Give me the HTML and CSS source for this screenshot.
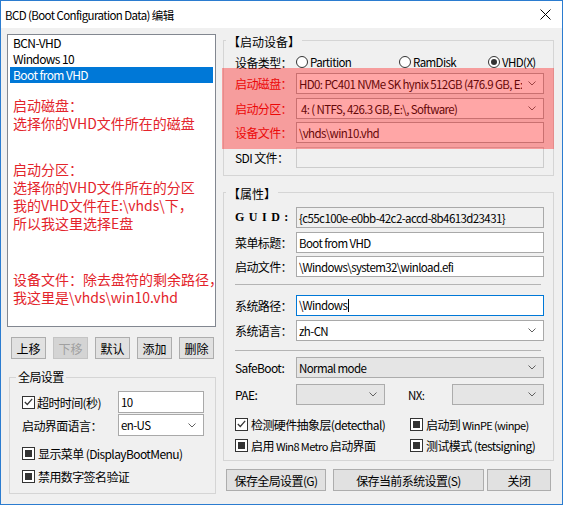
FILE: index.html
```html
<!DOCTYPE html>
<html lang="zh-CN">
<head>
<meta charset="utf-8">
<title>BCD 编辑</title>
<link rel="stylesheet" href="styles.css">
</head>
<body>
<div class="window">
  <div class="titlebar">
    <span class="title">BCD (Boot Configuration Data) 编辑</span>
    <svg class="close" width="11" height="11" viewBox="0 0 11 11"><path d="M0.5 0.5 L10.5 10.5 M10.5 0.5 L0.5 10.5" stroke="#000" stroke-width="1" fill="none"/></svg>
  </div>
  <div class="client">
    <div class="leftcol">
      <div class="listbox">
        <div class="item">BCN-VHD</div>
        <div class="item">Windows 10</div>
        <div class="item sel">Boot from VHD</div>
        <div class="note n1">启动磁盘：<br>选择你的VHD文件所在的磁盘</div>
        <div class="note n2">启动分区：<br>选择你的VHD文件所在的分区<br>我的VHD文件在E:\vhds\下，<br>所以我这里选择E盘</div>
        <div class="note n3">设备文件：除去盘符的剩余路径，<br>我这里是\vhds\win10.vhd</div>
      </div>
      <div class="btnrow">
        <div class="btn">上移</div>
        <div class="btn disabled">下移</div>
        <div class="btn">默认</div>
        <div class="btn">添加</div>
        <div class="btn">删除</div>
      </div>
      <fieldset class="group global">
        <legend>全局设置</legend>
        <div class="grow r1">
          <div class="glabel"><span class="cb chk"><svg width="9" height="8" viewBox="0 0 9 8"><path d="M0.8 4 L3.3 6.5 L8.2 0.8" stroke="#333" stroke-width="1.2" fill="none"/></svg></span><span>超时时间(秒)</span></div>
          <div class="ctl gctl">10</div>
        </div>
        <div class="grow r2">
          <div class="glabel">启动界面语言：</div>
          <div class="ctl gctl combo"><span class="val">en-US</span><svg class="arrow" width="8" height="5" viewBox="0 0 8 5"><path d="M0.5 0.5 L4 4 L7.5 0.5" stroke="#606060" fill="none"/></svg></div>
        </div>
        <div class="crow r3"><span class="cb ind"></span><span>显示菜单 (DisplayBootMenu)</span></div>
        <div class="crow r4"><span class="cb ind"></span><span>禁用数字签名验证</span></div>
      </fieldset>
    </div>
    <div class="rightcol">
      <fieldset class="group g1">
        <legend>【启动设备】</legend>
        <div class="frow radios">
          <span class="flabel">设备类型：</span>
          <span class="radio w1"><span class="rb"></span>Partition</span>
          <span class="radio w2"><span class="rb"></span>RamDisk</span>
          <span class="radio"><span class="rb on"></span>VHD(X)</span>
        </div>
        <div class="frow m1">
          <span class="flabel red">启动磁盘：</span>
          <div class="ctl combo"><span class="val">HD0: PC401 NVMe SK hynix 512GB (476.9 GB, E:\, Software)</span><svg class="arrow" width="8" height="5" viewBox="0 0 8 5"><path d="M0.5 0.5 L4 4 L7.5 0.5" stroke="#606060" fill="none"/></svg></div>
        </div>
        <div class="frow m4">
          <span class="flabel red">启动分区：</span>
          <div class="ctl combo"><span class="val">&nbsp;4: ( NTFS, 426.3 GB, E:\, Software)</span><svg class="arrow" width="8" height="5" viewBox="0 0 8 5"><path d="M0.5 0.5 L4 4 L7.5 0.5" stroke="#606060" fill="none"/></svg></div>
        </div>
        <div class="frow m3">
          <span class="flabel red">设备文件：</span>
          <div class="ctl">\vhds\win10.vhd</div>
        </div>
        <div class="frow m4">
          <span class="flabel">SDI 文件：</span>
          <div class="ctl dis"></div>
        </div>
      </fieldset>
      <fieldset class="group g2">
        <legend>【属性】</legend>
        <div class="frow guidrow">
          <span class="flabel guid">GUID:</span>
          <div class="ctl ro">{c55c100e-e0bb-42c2-accd-8b4613d23431}</div>
        </div>
        <div class="frow m4">
          <span class="flabel">菜单标题：</span>
          <div class="ctl">Boot from VHD</div>
        </div>
        <div class="frow m3">
          <span class="flabel">启动文件：</span>
          <div class="ctl">\Windows\system32\winload.efi</div>
        </div>
        <div class="sep s1"></div>
        <div class="frow h22 m9">
          <span class="flabel">系统路径：</span>
          <div class="ctl focus">\Windows<span class="caret"></span></div>
        </div>
        <div class="frow m4">
          <span class="flabel">系统语言：</span>
          <div class="ctl combo"><span class="val">zh-CN</span><svg class="arrow" width="8" height="5" viewBox="0 0 8 5"><path d="M0.5 0.5 L4 4 L7.5 0.5" stroke="#606060" fill="none"/></svg></div>
        </div>
        <div class="sep s2"></div>
        <div class="frow m6">
          <span class="flabel">SafeBoot:</span>
          <div class="ctl combo list"><span class="val">Normal mode</span><svg class="arrow" width="8" height="5" viewBox="0 0 8 5"><path d="M0.5 0.5 L4 4 L7.5 0.5" stroke="#606060" fill="none"/></svg></div>
        </div>
        <div class="frow m6">
          <span class="flabel">PAE:</span>
          <div class="ctl combo list pae"><span class="val"></span><svg class="arrow" width="8" height="5" viewBox="0 0 8 5"><path d="M0.5 0.5 L4 4 L7.5 0.5" stroke="#606060" fill="none"/></svg></div>
          <span class="nxlabel">NX:</span>
          <div class="ctl combo list"><span class="val"></span><svg class="arrow" width="8" height="5" viewBox="0 0 8 5"><path d="M0.5 0.5 L4 4 L7.5 0.5" stroke="#606060" fill="none"/></svg></div>
        </div>
        <div class="chkgrid">
          <div class="crow"><span class="cb chk"><svg width="9" height="8" viewBox="0 0 9 8"><path d="M0.8 4 L3.3 6.5 L8.2 0.8" stroke="#333" stroke-width="1.2" fill="none"/></svg></span><span>检测硬件抽象层(detecthal)</span></div>
          <div class="crow"><span class="cb ind"></span><span>启动到 <span class="sm">WinPE (winpe)</span></span></div>
          <div class="crow"><span class="cb ind"></span><span>启用 <span class="sm">Win8 Metro</span> 启动界面</span></div>
          <div class="crow"><span class="cb ind"></span><span>测试模式 (testsigning)</span></div>
        </div>
      </fieldset>
      <div class="bottombtns">
        <div class="btn b1">保存全局设置(G)</div>
        <div class="btn b2">保存当前系统设置(S)</div>
        <div class="btn b3">关闭</div>
      </div>
      <div class="highlight"></div>
    </div>
  </div>
</div>
</body>
</html>
```

FILE: styles.css
```css
html, body {
  margin: 0;
  padding: 0;
  background: #ffffff;
}
body {
  font-family: "Noto Sans CJK SC", sans-serif;
  font-size: 11.5px;
  color: #000;
}
.window {
  width: 563px;
  height: 505px;
  box-sizing: border-box;
  border: 1px solid #2b7cd0;
  background: #f0f0f0;
  display: flex;
  flex-direction: column;
  letter-spacing: -0.6px;
}
.titlebar {
  height: 27px;
  flex: none;
  background: #fff;
  display: flex;
  align-items: center;
  justify-content: space-between;
  padding: 0 11px 0 4px;
  font-size: 11.5px;
}
.client {
  flex: 1;
  display: flex;
  gap: 7px;
  padding: 3px 8px 0 6px;
}
.leftcol {
  width: 209px;
  flex: none;
  display: flex;
  flex-direction: column;
  padding-top: 3px;
}
.listbox {
  height: 293px;
  box-sizing: border-box;
  border: 1px solid #828790;
  background: #fff;
  padding: 0 2px;
  overflow: hidden;
}
.item {
  height: 16px;
  line-height: 16px;
  padding-left: 3px;
  white-space: nowrap;
  font-size: 12px;
}
.item.sel {
  background: #0078d7;
  color: #fff;
}
.note {
  color: #e3242b;
  font-size: 14px;
  line-height: 18px;
  white-space: nowrap;
  padding-left: 3px;
  letter-spacing: 0;
}
.n1 { margin-top: 13px; }
.n2 { margin-top: 28px; }
.n3 { margin-top: 38px; }

.btn {
  height: 22px;
  box-sizing: border-box;
  border: 1px solid #adadad;
  background: #e1e1e1;
  display: flex;
  align-items: center;
  justify-content: center;
  font-size: 12px;
  white-space: nowrap;
}
.btn.disabled {
  color: #a0a0a0;
  background: #d4d4d4;
  border-color: #c4c4c4;
}
.btnrow {
  display: flex;
  justify-content: space-between;
  margin-top: 10px;
  padding: 0 2px 0 4px;
}
.btnrow .btn { width: 35px; letter-spacing: 0; }

fieldset.group {
  margin: 0;
  border: 1px solid #d5d5d5;
  padding: 0;
  min-width: 0;
  box-sizing: border-box;
}
fieldset.group legend {
  padding: 4px 2px 0;
  line-height: 14px;
  font-size: 12px;
}
.global {
  margin: 10px 0 0 2px !important;
  height: 125px;
  padding: 0 0 0 12px !important;
}
.global legend {
  margin-left: -6px;
  padding: 0 2px !important;
  line-height: 16px !important;
}
.grow {
  display: flex;
  align-items: center;
  height: 22px;
}
.grow.r1 { margin-top: 6px; }
.grow.r2 { margin-top: 1px; }
.glabel {
  width: 96px;
  display: flex;
  align-items: center;
  gap: 2px;
  white-space: nowrap;
  font-size: 12px;
}
.gctl { flex: none !important; width: 86px; height: 22px !important; }
.crow {
  display: flex;
  align-items: center;
  gap: 3px;
  height: 18px;
  white-space: nowrap;
  font-size: 12px;
}
.crow.r3 { margin-top: 8px; }
.crow.r4 { margin-top: 5px; }

.cb {
  width: 13px;
  height: 13px;
  flex: none;
  box-sizing: border-box;
  border: 1px solid #333;
  background: #fff;
  display: flex;
  align-items: center;
  justify-content: center;
}
.cb.ind::after {
  content: "";
  width: 7px;
  height: 7px;
  background: #333;
}

.rightcol {
  width: 331px;
  flex: none;
  display: flex;
  flex-direction: column;
  position: relative;
}
.g1 {
  height: 145px;
  padding: 0 9px 0 11px !important;
}
.g1 legend, .g2 legend { margin-left: -9px; letter-spacing: 0; }
.g2 {
  margin-top: 7px !important;
  height: 278px;
  padding: 0 9px 0 11px !important;
}
.frow {
  display: flex;
  align-items: center;
  height: 21px;
  white-space: nowrap;
}
.frow.h22 { height: 22px; }
.radios { height: 20px; margin-top: 3px; }
.m1 { margin-top: 1px; }
.m3 { margin-top: 3px; }
.m4 { margin-top: 4px; }
.m6 { margin-top: 6px; }
.m9 { margin-top: 9px; }
.guidrow { margin-top: 6px; }
.flabel {
  width: 61px;
  flex: none;
  font-size: 12px;
}
.flabel.red { color: #e00000; }
.flabel.guid {
  font-family: "Liberation Serif", serif;
  font-weight: bold;
  letter-spacing: 4.5px;
  font-size: 12px;
}
.radio {
  display: flex;
  align-items: center;
  gap: 2px;
}
.radio.w1 { width: 103px; }
.radio.w2 { width: 89px; }
.rb {
  width: 12px;
  height: 12px;
  box-sizing: border-box;
  border: 1px solid #333;
  border-radius: 50%;
  background: #fff;
  display: flex;
  align-items: center;
  justify-content: center;
}
.rb.on::after {
  content: "";
  width: 6px;
  height: 6px;
  border-radius: 50%;
  background: #333;
}
.ctl {
  flex: 1;
  min-width: 0;
  height: 21px;
  box-sizing: border-box;
  border: 1px solid #a9a9a9;
  background: #fff;
  display: flex;
  align-items: center;
  padding: 0 2px;
  white-space: nowrap;
  overflow: hidden;
}
.ctl .val {
  flex: 1;
  min-width: 0;
  overflow: hidden;
}
.ctl .arrow {
  flex: none;
  margin: 0 5px 0 6px;
}
.ctl.ro { background: #f0f0f0; border-color: #a9a9a9; }
.ctl.dis { background: #f0f0f0; border-color: #cccccc; }
.ctl.focus { border-color: #0078d7; }
.ctl.list { background: #e5e5e5; border-color: #acacac; }
.ctl.pae { flex: none; width: 89px; }
.nxlabel {
  width: 44px;
  margin-left: 23px;
  flex: none;
}
.caret {
  display: inline-block;
  width: 1px;
  height: 13px;
  background: #000;
  margin-left: 1px;
}
.sep {
  height: 1px;
  background: #b4b4b4;
  margin-right: 3px;
}
.s1 { margin-top: 7px; }
.s2 { margin-top: 9px; }
.s2 + .frow { margin-top: 6px; }
.chkgrid {
  display: grid;
  grid-template-columns: 175px 1fr;
  row-gap: 3px;
  margin-top: 10px;
}
.chkgrid .crow { height: 18px; }
.sm { font-size: 11px; }

.bottombtns {
  display: flex;
  margin-top: 8px;
  padding-left: 3px;
}
.bottombtns .b1 { width: 100px; }
.bottombtns .b2 { width: 151px; margin-left: 7px; }
.bottombtns .b3 { width: 64px; margin-left: 3px; }

.highlight {
  position: absolute;
  left: -1px;
  top: 37px;
  width: 332px;
  height: 81px;
  background: rgba(255, 20, 20, 0.38);
  pointer-events: none;
}
```
